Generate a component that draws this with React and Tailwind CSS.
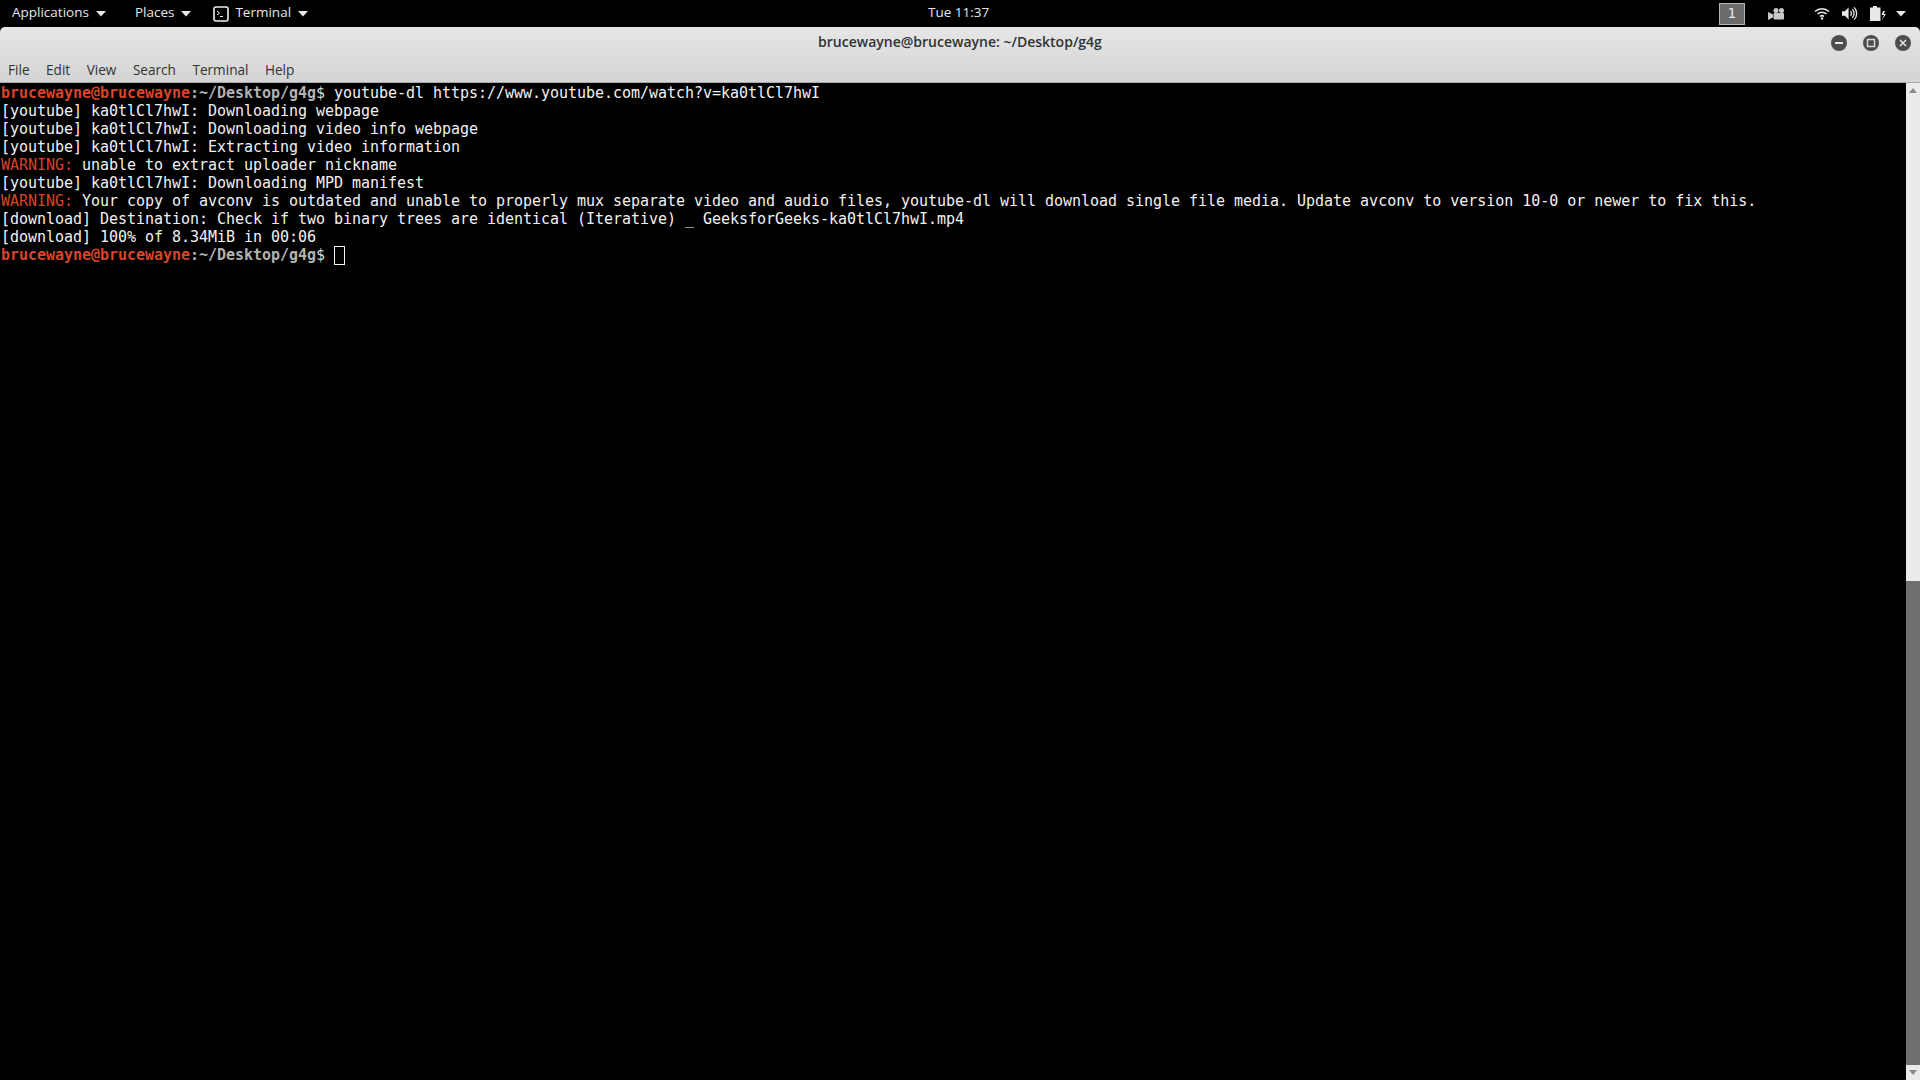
import React from 'react';

const Caret = () => (
  <svg width="10" height="6" viewBox="0 0 10 6" className="ml-[7px]">
    <path d="M0 0h10L5 5.500z" fill="#e8e8e8" />
  </svg>
);

const TerminalIcon = () => (
  <svg width="16" height="16" viewBox="0 0 16 16" className="mr-[6px]">
    <rect x="1" y="1" width="14" height="14" rx="2" fill="none" stroke="#f0f0f0" strokeWidth="1.600" />
    <path d="M4 5l2.500 2L4 9M7 10.500h3" fill="none" stroke="#f0f0f0" strokeWidth="1" />
  </svg>
);

const WinButton = ({ children }) => (
  <div className="w-4 h-4 rounded-full bg-[#4d4d4d] flex items-center justify-center">
    <svg width="16" height="16" viewBox="0 0 16 16">{children}</svg>
  </div>
);

const Red = ({ children }) => <span className="text-[#d9432a] font-bold">{children}</span>;
const Prompt = () => (
  <>
    <Red>brucewayne@brucewayne</Red>
    <span className="text-[#b2b2b2] font-bold">:~/Desktop/g4g</span>
    <span className="text-[#dcdcdc]">$ </span>
  </>
);
const Warn = () => <span className="text-[#d9432a]">WARNING: </span>;

const menu = ['File', 'Edit', 'View', 'Search', 'Terminal', 'Help'];

const App = () => {
  return (
    <div className="w-[1920px] h-[1080px] bg-black flex flex-col overflow-hidden font-['Open_Sans','Noto_Sans',sans-serif]">
      {/* gnome top bar */}
      <div className="h-[27px] shrink-0 bg-black text-[#e6e6e6] text-[13.5px] flex items-center relative">
        <div className="flex items-center pl-3">
          <span className="pb-[2px]">Applications</span>
          <Caret />
          <span className="ml-[29px] pb-[2px]">Places</span>
          <Caret />
          <div className="ml-[22px]"><TerminalIcon /></div>
          <span className="pb-[2px]">Terminal</span>
          <Caret />
        </div>
        <div className="absolute left-[928px] top-0 h-[25px] flex items-center">Tue 11:37</div>
        <div className="ml-auto flex items-center pr-[14px]">
          <div className="w-[26px] h-[22px] bg-[#6b6b6b] border border-[#b5b5b5] flex items-center justify-center text-[14px] font-['DejaVu_Sans',sans-serif]">1</div>
          <svg width="17" height="14" viewBox="0 0 17 14" className="ml-[23px]" fill="#c8c8c8">
            <circle cx="8" cy="3.500" r="2.500" />
            <circle cx="13.500" cy="3.500" r="2.500" />
            <rect x="5.500" y="6" width="10.500" height="6.500" rx="1" />
            <path d="M0 5l5 2.500v3L0 13z" />
          </svg>
          <svg width="16" height="13" viewBox="0 0 16 13" className="ml-[29px]" fill="none" stroke="#e8e8e8">
            <path d="M1 4.500a10 10 0 0 1 14 0" strokeWidth="1.500" />
            <path d="M3.500 7a6.500 6.500 0 0 1 9 0" strokeWidth="1.500" />
            <path d="M6 9.500a3 3 0 0 1 4 0" strokeWidth="1.500" />
            <circle cx="8" cy="11.500" r="1.200" fill="#e8e8e8" stroke="none" />
          </svg>
          <svg width="16" height="15" viewBox="0 0 17 15" className="ml-[12px]" fill="none" stroke="#e8e8e8">
            <path d="M0 5h3l4-4v13l-4-4H0z" fill="#e8e8e8" stroke="none" />
            <path d="M9 5a3.500 3.500 0 0 1 0 5" strokeWidth="1.400" />
            <path d="M11 3a6.500 6.500 0 0 1 0 9" strokeWidth="1.400" />
            <path d="M13 1a9.500 9.500 0 0 1 0 13" strokeWidth="1.400" />
          </svg>
          <svg width="16" height="16" viewBox="0 0 16 16" className="ml-[12px]" fill="#e8e8e8">
            <path d="M3 0h4v1.500h3.500V15H0V1.500h3z" />
            <path d="M13 5l-1.500 4H14l-2.500 5.500 4.500-6.500h-2.200l1.200-3z" />
          </svg>
          <div className="ml-[3px]"><Caret /></div>
        </div>
      </div>

      {/* window header */}
      <div className="h-[56px] shrink-0 bg-gradient-to-b from-[#e6e6e6] to-[#d4d4d4] rounded-t-[5px] border-b border-[#a8a8b0] flex flex-col">
        <div className="h-[27px] relative flex items-center justify-center text-[14px] font-semibold text-[#2e3436]">
          <span className="relative top-[1px]">brucewayne@brucewayne: ~/Desktop/g4g</span>
          <div className="absolute right-[9px] top-[8px] flex gap-[16px]">
            <WinButton><path d="M4 7h8v2H4z" fill="#e6e6e6" /></WinButton>
            <WinButton><rect x="4.500" y="4.500" width="7" height="7" fill="none" stroke="#d8d8d8" strokeWidth="1.500" /></WinButton>
            <WinButton><path d="M5 5l6 6M11 5l-6 6" stroke="#e6e6e6" strokeWidth="1.500" /></WinButton>
          </div>
        </div>
        <div className="flex items-center h-[28px] text-[13.6px] text-[#2e3436] pl-2 gap-[16.500px] pt-[5px]">
          {menu.map(m => <span key={m}>{m}</span>)}
        </div>
      </div>

      {/* terminal */}
      <div className="flex-1 flex min-h-0">
        <pre className="flex-1 m-0 text-[15px] leading-[18px] tracking-[-0.03px] pt-[1px] pl-[1px] text-[#f2f2f2] font-['DejaVu_Sans_Mono',monospace]">
          <div><Prompt />youtube-dl https://www.youtube.com/watch?v=ka0tlCl7hwI</div>
          <div>[youtube] ka0tlCl7hwI: Downloading webpage</div>
          <div>[youtube] ka0tlCl7hwI: Downloading video info webpage</div>
          <div>[youtube] ka0tlCl7hwI: Extracting video information</div>
          <div><Warn />unable to extract uploader nickname</div>
          <div>[youtube] ka0tlCl7hwI: Downloading MPD manifest</div>
          <div><Warn />Your copy of avconv is outdated and unable to properly mux separate video and audio files, youtube-dl will download single file media. Update avconv to version 10-0 or newer to fix this.</div>
          <div>[download] Destination: Check if two binary trees are identical (Iterative) _ GeeksforGeeks-ka0tlCl7hwI.mp4</div>
          <div>[download] 100% of 8.34MiB in 00:06</div>
          <div className="flex items-start">
            <span><Prompt /></span>
            <span className="inline-block w-[11px] h-[19px] border border-[#f2f2f2]" />
          </div>
        </pre>
        {/* scrollbar */}
        <div className="w-[14px] shrink-0 bg-[#ebebeb] flex flex-col">
          <div className="h-[15px] flex items-center justify-center">
            <svg width="8" height="5" viewBox="0 0 8 5"><path d="M0 5l4-5 4 5z" fill="#8a8a8a" /></svg>
          </div>
          <div className="h-[483px]" />
          <div className="flex-1 bg-[#707070]" />
          <div className="h-[15px] flex items-center justify-center">
            <svg width="8" height="5" viewBox="0 0 8 5"><path d="M0 0l4 5 4-5z" fill="#8a8a8a" /></svg>
          </div>
        </div>
      </div>
    </div>
  );
};

export default App;
